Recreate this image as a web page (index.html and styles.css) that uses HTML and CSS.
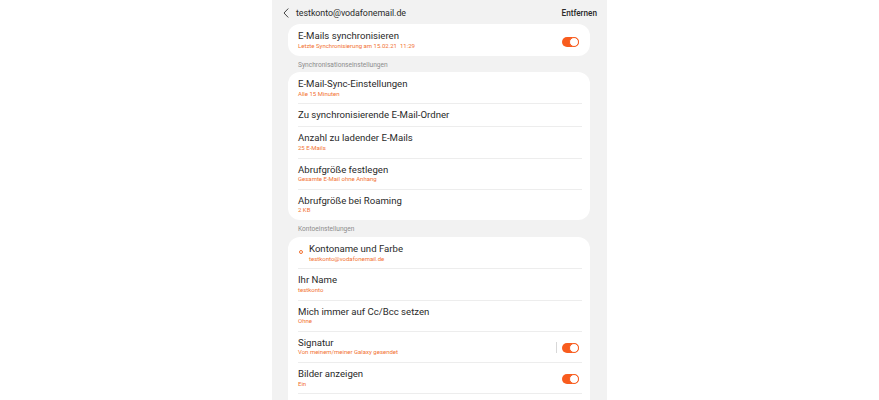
FILE: index.html
```html
<!DOCTYPE html>
<html lang="de">
<head>
<meta charset="utf-8">
<title>testkonto@vodafonemail.de</title>
<link rel="stylesheet" href="styles.css">
</head>
<body>
<div class="panel">
  <header class="topbar">
    <svg class="back" width="6" height="10" viewBox="0 0 6 10"><path d="M5 0.8 L1 5 L5 9.2" fill="none" stroke="#444" stroke-width="1" stroke-linecap="round" stroke-linejoin="round"/></svg>
    <span class="topbar-title">testkonto@vodafonemail.de</span>
    <span class="topbar-action">Entfernen</span>
  </header>

  <section class="card card-single">
    <div class="row">
      <div class="row-text">
        <div class="title">E-Mails synchronisieren</div>
        <div class="sub">Letzte Synchronisierung am 15.02.21&nbsp; 11:29</div>
      </div>
      <span class="toggle"><span class="knob"></span></span>
    </div>
  </section>

  <div class="section-label">Synchronisationseinstellungen</div>
  <section class="card">
    <div class="row">
      <div class="row-text">
        <div class="title">E-Mail-Sync-Einstellungen</div>
        <div class="sub">Alle 15 Minuten</div>
      </div>
    </div>
    <div class="row row-short">
      <div class="row-text">
        <div class="title">Zu synchronisierende E-Mail-Ordner</div>
      </div>
    </div>
    <div class="row">
      <div class="row-text">
        <div class="title">Anzahl zu ladender E-Mails</div>
        <div class="sub">25 E-Mails</div>
      </div>
    </div>
    <div class="row">
      <div class="row-text">
        <div class="title">Abrufgröße festlegen</div>
        <div class="sub">Gesamte E-Mail ohne Anhang</div>
      </div>
    </div>
    <div class="row">
      <div class="row-text">
        <div class="title">Abrufgröße bei Roaming</div>
        <div class="sub">2 KB</div>
      </div>
    </div>
  </section>

  <div class="section-label">Kontoeinstellungen</div>
  <section class="card card-open">
    <div class="row">
      <span class="dot"></span>
      <div class="row-text">
        <div class="title">Kontoname und Farbe</div>
        <div class="sub">testkonto@vodafonemail.de</div>
      </div>
    </div>
    <div class="row">
      <div class="row-text">
        <div class="title">Ihr Name</div>
        <div class="sub">testkonto</div>
      </div>
    </div>
    <div class="row">
      <div class="row-text">
        <div class="title">Mich immer auf Cc/Bcc setzen</div>
        <div class="sub">Ohne</div>
      </div>
    </div>
    <div class="row">
      <div class="row-text">
        <div class="title">Signatur</div>
        <div class="sub">Von meinem/meiner Galaxy gesendet</div>
      </div>
      <span class="vsep"></span>
      <span class="toggle"><span class="knob"></span></span>
    </div>
    <div class="row">
      <div class="row-text">
        <div class="title">Bilder anzeigen</div>
        <div class="sub">Ein</div>
      </div>
      <span class="toggle"><span class="knob"></span></span>
    </div>
    <div class="row row-cut"></div>
  </section>
</div>
</body>
</html>
```

FILE: styles.css
```css
html, body {
  margin: 0;
  padding: 0;
  background: #ffffff;
  height: 400px;
  overflow: hidden;
}

body {
  font-family: Roboto, "Noto Sans", "Liberation Sans", sans-serif;
  color: #2a2a2a;
}

.panel {
  width: 335px;
  height: 400px;
  margin-left: 272px;
  background: #f2f2f2;
  display: flex;
  flex-direction: column;
  padding: 0 17px 0 16px;
  box-sizing: border-box;
}

.topbar {
  height: 24px;
  flex: none;
  display: flex;
  align-items: center;
  padding: 2px 10px 0 11px;
  box-sizing: border-box;
  margin: 0 -17px 0 -16px;
}

.back {
  flex: none;
  margin-right: 7px;
}

.topbar-title {
  font-size: 8.9px;
  letter-spacing: -0.05px;
  color: #2a2a2a;
  flex: 1;
}

.topbar-action {
  font-size: 8.2px;
  font-weight: 500;
  color: #2a2a2a;
}

.card {
  background: #ffffff;
  border-radius: 12px;
  padding: 0 8px 0 10px;
  flex: none;
}

.card-single .row {
  height: 32px;
  padding-top: 5px;
}

.card-open {
  border-bottom-left-radius: 0;
  border-bottom-right-radius: 0;
  flex: 1;
  margin-top: 1px;
}

.row {
  display: flex;
  align-items: center;
  height: 31.25px;
  padding: 5px 0 3px;
  box-sizing: border-box;
  border-top: 1px solid #ededed;
}

.row:first-child {
  border-top: none;
  padding-top: 6px;
}

.row-short {
  height: 23px;
}

.row-text {
  flex: 1;
  display: flex;
  flex-direction: column;
  align-self: flex-start;
}

.title {
  font-size: 9.6px;
  line-height: 12px;
  color: #2a2a2a;
}

.sub {
  font-size: 6px;
  line-height: 8px;
  margin-top: -0.5px;
  color: #f27232;
}

.row-cut {
  height: 8px;
}

.section-label {
  font-size: 6.6px;
  line-height: 8px;
  color: #8c8c8c;
  padding: 5px 0 3px 10px;
  flex: none;
}

.toggle {
  flex: none;
  width: 17px;
  height: 10px;
  border-radius: 5px;
  background: #f85c1e;
  position: relative;
  margin-right: 3px;
}

.knob {
  position: absolute;
  right: 0;
  top: 0;
  width: 10px;
  height: 10px;
  box-sizing: border-box;
  border-radius: 50%;
  background: #ffffff;
  border: 1.5px solid #f85c1e;
}

.vsep {
  flex: none;
  width: 1px;
  height: 11px;
  background: #d8d8d8;
  margin-right: 5px;
}

.dot {
  flex: none;
  align-self: flex-start;
  margin-top: 7px;
  width: 4px;
  height: 4px;
  box-sizing: border-box;
  border: 1px solid #f27232;
  border-radius: 50%;
  margin-left: 1px;
  margin-right: 6px;
}
```
